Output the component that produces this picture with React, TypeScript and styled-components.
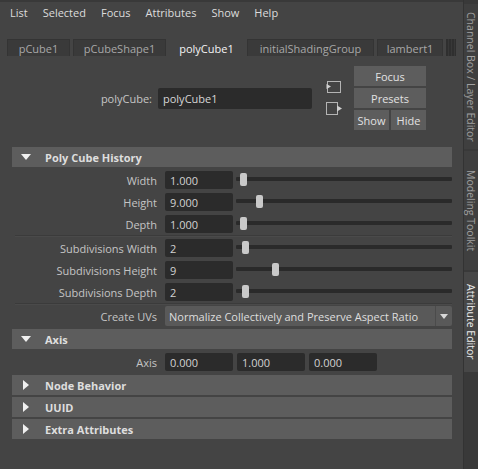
import React from "react";
import styled, { createGlobalStyle } from "styled-components";

const GlobalStyle = createGlobalStyle`
  html, body { margin: 0; padding: 0; background: #444444; }
  body {
    font-family: "Open Sans", "Noto Sans", "DejaVu Sans", sans-serif;
    font-size: 11px;
    color: #cccccc;
  }
  #root { width: 478px; height: 469px; }
`;

const Window = styled.div`
  display: flex;
  width: 478px;
  height: 469px;
  overflow: hidden;
  background: #444444;
`;

const Main = styled.div`
  flex: 1;
  min-width: 0;
  display: flex;
  flex-direction: column;
`;

const MenuBar = styled.div`
  display: flex;
  align-items: center;
  gap: 15px;
  height: 21px;
  padding-left: 10px;
  border-top: 2px solid #393939;
  color: #dcdcdc;
  font-size: 11px;
`;

const MenuItem = styled.span`
  white-space: nowrap;
`;

const TabBar = styled.div`
  display: flex;
  align-items: stretch;
  gap: 3px;
  height: 17px;
  margin: 16px 0 0 7px;
`;

const Tab = styled.div<{ $active?: boolean; $w: number }>`
  width: ${(p) => p.$w}px;
  box-sizing: border-box;
  display: flex;
  align-items: center;
  justify-content: center;
  background: ${(p) => (p.$active ? "transparent" : "#3a3a3a")};
  border: 1px solid ${(p) => (p.$active ? "transparent" : "#343434")};
  border-bottom: none;
  color: ${(p) => (p.$active ? "#f4f4f4" : "#a8a8a8")};
  font-size: 11px;
  white-space: nowrap;
`;

const TabStub = styled.div`
  width: 10px;
  background: repeating-linear-gradient(90deg, #2f2f2f 0 2px, #383838 2px 3px);
`;

const NodeHeader = styled.div`
  display: flex;
  align-items: center;
  padding: 10px 0 17px 12px;
`;

const NodeLabel = styled.div`
  width: 140px;
  text-align: right;
  color: #c6c6c6;
  font-size: 11px;
`;

const NameField = styled.div`
  width: 154px;
  height: 21px;
  margin-left: 6px;
  box-sizing: border-box;
  padding-left: 5px;
  display: flex;
  align-items: center;
  background: #2b2b2b;
  border-radius: 2px;
  color: #d6d6d6;
  font-size: 11px;
`;

const ConnIcons = styled.div`
  display: flex;
  flex-direction: column;
  gap: 8px;
  margin-left: 14px;
`;

const ButtonGrid = styled.div`
  display: grid;
  grid-template-columns: 35px 35px;
  gap: 2px;
  margin-left: 11px;
`;

const Button = styled.div<{ $wide?: boolean }>`
  grid-column: span ${(p) => (p.$wide ? 2 : 1)};
  height: 20px;
  display: flex;
  align-items: center;
  justify-content: center;
  background: #5d5d5d;
  color: #e2e2e2;
  font-size: 11px;
`;

const Frames = styled.div`
  display: flex;
  flex-direction: column;
  gap: 2px;
  padding: 0 11px 0 12px;
`;

const FrameHeader = styled.div`
  display: flex;
  align-items: center;
  height: 20px;
  background: #5d5d5d;
  color: #dedede;
  font-weight: 700;
  font-size: 11px;
`;

const Caret = styled.span<{ $open: boolean }>`
  width: 11px;
  margin: 0 14px 0 8px;
  display: flex;
  justify-content: center;
  &::before {
    content: "";
    width: 0;
    height: 0;
    ${(p) =>
      p.$open
        ? `border-left: 5.5px solid transparent; border-right: 5.5px solid transparent; border-top: 6px solid #f0f0f0;`
        : `border-top: 5.5px solid transparent; border-bottom: 5.5px solid transparent; border-left: 6px solid #f0f0f0;`}
  }
`;

const FrameBody = styled.div`
  padding-top: 2px;
`;

const AttrRow = styled.div`
  display: flex;
  align-items: center;
  height: 22px;
`;

const AttrLabel = styled.div`
  width: 145px;
  margin-right: 8px;
  text-align: right;
  color: #c4c4c4;
  font-size: 11px;
  white-space: nowrap;
`;

const NumField = styled.div`
  width: 68px;
  height: 18px;
  box-sizing: border-box;
  padding-left: 5px;
  display: flex;
  align-items: center;
  background: #2b2b2b;
  border-radius: 2px;
  color: #d2d2d2;
  font-size: 11px;
`;

const FieldGroup = styled.div`
  display: flex;
  gap: 4px;
`;

const Slider = styled.div`
  position: relative;
  flex: 1;
  height: 14px;
  margin-left: 3px;
  &::before {
    content: "";
    position: absolute;
    left: 0;
    right: 0;
    top: 4px;
    height: 4px;
    background: #2a2a2a;
    border-radius: 1px;
  }
`;

const Handle = styled.div`
  position: absolute;
  top: 0;
  width: 7px;
  height: 13px;
  background: #c9c9c9;
  border-radius: 2px;
`;

const Separator = styled.div`
  height: 2px;
  margin-left: 3px;
  box-sizing: border-box;
  border-top: 1px solid #3b3b3b;
  border-bottom: 1px solid #4a4a4a;
`;

const Dropdown = styled.div`
  flex: 1;
  height: 20px;
  display: flex;
  align-items: stretch;
  background: #595959;
  border-radius: 2px;
  color: #dedede;
  font-size: 11px;
`;

const DropdownText = styled.div`
  flex: 1;
  display: flex;
  align-items: center;
  padding-left: 4px;
  white-space: nowrap;
  overflow: hidden;
`;

const DropdownArrow = styled.div`
  width: 16px;
  display: flex;
  align-items: center;
  justify-content: center;
  border-left: 1px solid #4b4b4b;
  &::before {
    content: "";
    border-left: 4.5px solid transparent;
    border-right: 4.5px solid transparent;
    border-top: 5px solid #d8d8d8;
  }
`;

const SideStrip = styled.div`
  width: 15px;
  box-sizing: border-box;
  display: flex;
  flex-direction: column;
  gap: 2px;
  padding-top: 4px;
  background: #393939;
  border-left: 1px solid #333333;
`;

const SideTab = styled.div<{ $active?: boolean; $h: number }>`
  height: ${(p) => p.$h}px;
  display: flex;
  align-items: center;
  justify-content: center;
  background: ${(p) => (p.$active ? "#474747" : "#3f3f3f")};
  color: ${(p) => (p.$active ? "#ececec" : "#a0a0a0")};
  font-size: 10.5px;
`;

const SideTabText = styled.span`
  writing-mode: vertical-rl;
  white-space: nowrap;
`;

const InputIcon = () => (
  <svg width="16" height="13" viewBox="0 0 16 13">
    <rect x="1.5" y="0.5" width="13" height="11" fill="none" stroke="#b4b4b4" />
    <polygon points="0.5,3 5,5.5 0.5,8" fill="#d0d0d0" />
  </svg>
);

const OutputIcon = () => (
  <svg width="17" height="14" viewBox="0 0 17 14">
    <rect x="0.5" y="0.5" width="11" height="12" fill="none" stroke="#b4b4b4" />
    <polygon points="11,3.5 16,6.5 11,9.5" fill="#d0d0d0" />
  </svg>
);

type SliderAttr = { label: string; value: string; pos: number };

const groupA: SliderAttr[] = [
  { label: "Width", value: "1.000", pos: 4 },
  { label: "Height", value: "9.000", pos: 20 },
  { label: "Depth", value: "1.000", pos: 4 },
];
const groupB: SliderAttr[] = [
  { label: "Subdivisions Width", value: "2", pos: 6 },
  { label: "Subdivisions Height", value: "9", pos: 36 },
  { label: "Subdivisions Depth", value: "2", pos: 6 },
];

const SliderRow = ({ label, value, pos }: SliderAttr) => (
  <AttrRow>
    <AttrLabel>{label}</AttrLabel>
    <NumField>{value}</NumField>
    <Slider>
      <Handle style={{ left: pos }} />
    </Slider>
  </AttrRow>
);

const Frame = ({
  title,
  open = false,
  children,
}: {
  title: string;
  open?: boolean;
  children?: React.ReactNode;
}) => (
  <div>
    <FrameHeader>
      <Caret $open={open} />
      {title}
    </FrameHeader>
    {open && <FrameBody>{children}</FrameBody>}
  </div>
);

const tabs = [
  { name: "pCube1", w: 63 },
  { name: "pCubeShape1", w: 93 },
  { name: "polyCube1", w: 75, active: true },
  { name: "initialShadingGroup", w: 127 },
  { name: "lambert1", w: 66 },
];

export default function App() {
  return (
    <>
      <GlobalStyle />
      <Window>
        <Main>
          <MenuBar>
            {["List", "Selected", "Focus", "Attributes", "Show", "Help"].map((m) => (
              <MenuItem key={m}>{m}</MenuItem>
            ))}
          </MenuBar>
          <TabBar>
            {tabs.map((t) => (
              <Tab key={t.name} $w={t.w} $active={t.active}>
                {t.name}
              </Tab>
            ))}
            <TabStub />
          </TabBar>
          <NodeHeader>
            <NodeLabel>polyCube:</NodeLabel>
            <NameField>polyCube1</NameField>
            <ConnIcons>
              <InputIcon />
              <OutputIcon />
            </ConnIcons>
            <ButtonGrid>
              <Button $wide>Focus</Button>
              <Button $wide>Presets</Button>
              <Button>Show</Button>
              <Button>Hide</Button>
            </ButtonGrid>
          </NodeHeader>
          <Frames>
            <Frame title="Poly Cube History" open>
              {groupA.map((a) => (
                <SliderRow key={a.label} {...a} />
              ))}
              <Separator />
              {groupB.map((a) => (
                <SliderRow key={a.label} {...a} />
              ))}
              <Separator />
              <AttrRow>
                <AttrLabel>Create UVs</AttrLabel>
                <Dropdown>
                  <DropdownText>Normalize Collectively and Preserve Aspect Ratio</DropdownText>
                  <DropdownArrow />
                </Dropdown>
              </AttrRow>
            </Frame>
            <Frame title="Axis" open>
              <AttrRow>
                <AttrLabel>Axis</AttrLabel>
                <FieldGroup>
                  <NumField>0.000</NumField>
                  <NumField>1.000</NumField>
                  <NumField>0.000</NumField>
                </FieldGroup>
              </AttrRow>
            </Frame>
            <Frame title="Node Behavior" />
            <Frame title="UUID" />
            <Frame title="Extra Attributes" />
          </Frames>
        </Main>
        <SideStrip>
          <SideTab $h={145}>
            <SideTabText>Channel Box / Layer Editor</SideTabText>
          </SideTab>
          <SideTab $h={119}>
            <SideTabText>Modeling Toolkit</SideTabText>
          </SideTab>
          <SideTab $h={100} $active>
            <SideTabText>Attribute Editor</SideTabText>
          </SideTab>
        </SideStrip>
      </Window>
    </>
  );
}
